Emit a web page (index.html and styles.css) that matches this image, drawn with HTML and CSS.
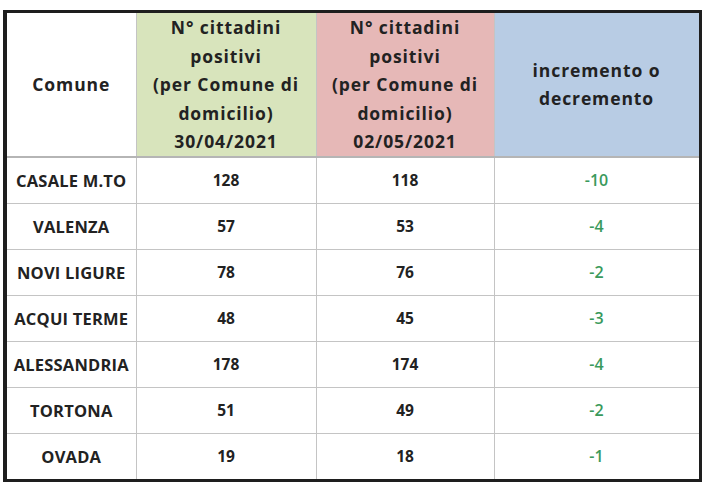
FILE: index.html
```html
<!DOCTYPE html>
<html lang="it">
<head>
<meta charset="utf-8">
<link rel="stylesheet" href="styles.css">
</head>
<body>
<table class="data">
  <colgroup>
    <col class="c1"><col class="c2"><col class="c3"><col class="c4">
  </colgroup>
  <thead>
    <tr>
      <th class="h-comune">Comune</th>
      <th class="h-green">N° cittadini<br>positivi<br>(per Comune di<br>domicilio)<br>30/04/2021</th>
      <th class="h-pink">N° cittadini<br>positivi<br>(per Comune di<br>domicilio)<br>02/05/2021</th>
      <th class="h-blue">incremento o<br>decremento</th>
    </tr>
  </thead>
  <tbody>
    <tr><td class="name">CASALE M.TO</td><td>128</td><td>118</td><td class="delta">-10</td></tr>
    <tr><td class="name">VALENZA</td><td>57</td><td>53</td><td class="delta">-4</td></tr>
    <tr><td class="name">NOVI LIGURE</td><td>78</td><td>76</td><td class="delta">-2</td></tr>
    <tr><td class="name">ACQUI TERME</td><td>48</td><td>45</td><td class="delta">-3</td></tr>
    <tr><td class="name">ALESSANDRIA</td><td>178</td><td>174</td><td class="delta">-4</td></tr>
    <tr><td class="name">TORTONA</td><td>51</td><td>49</td><td class="delta">-2</td></tr>
    <tr><td class="name">OVADA</td><td>19</td><td>18</td><td class="delta">-1</td></tr>
  </tbody>
</table>
</body>
</html>
```

FILE: styles.css
```css
html, body {
  margin: 0;
  padding: 0;
  background: #ffffff;
}
body {
  padding: 10px 0 0 3px;
  font-family: "Open Sans", "Lato", sans-serif;
  color: #222222;
}
.data {
  border-collapse: collapse;
  table-layout: fixed;
  width: 698px;
  border: 3px solid #1e1e1e;
  border-left-width: 4px;
}
.c1 { width: 131px; }
.c2 { width: 180px; }
.c3 { width: 178px; }
.c4 { width: 206px; }
.data th,
.data td {
  border: 1px solid #c4c4c4;
  text-align: center;
  vertical-align: middle;
  padding: 0;
}
.data th {
  height: 142px;
  font-size: 17.5px;
  font-weight: 700;
  line-height: 28.5px;
  letter-spacing: 0.9px;
  border-bottom: 2px solid #b5b5b5;
}
.h-comune { background: #ffffff; }
.h-green { background: #d8e4bc; }
.h-pink { background: #e6b8b7; }
.h-blue { background: #b8cce4; }
.data td {
  height: 45px;
  font-size: 15.5px;
  font-weight: 700;
}
.data td.name {
  font-size: 16.5px;
  letter-spacing: 0.2px;
}
.data td.delta {
  color: #3a9a5c;
  font-size: 16px;
  font-weight: 600;
}
```
